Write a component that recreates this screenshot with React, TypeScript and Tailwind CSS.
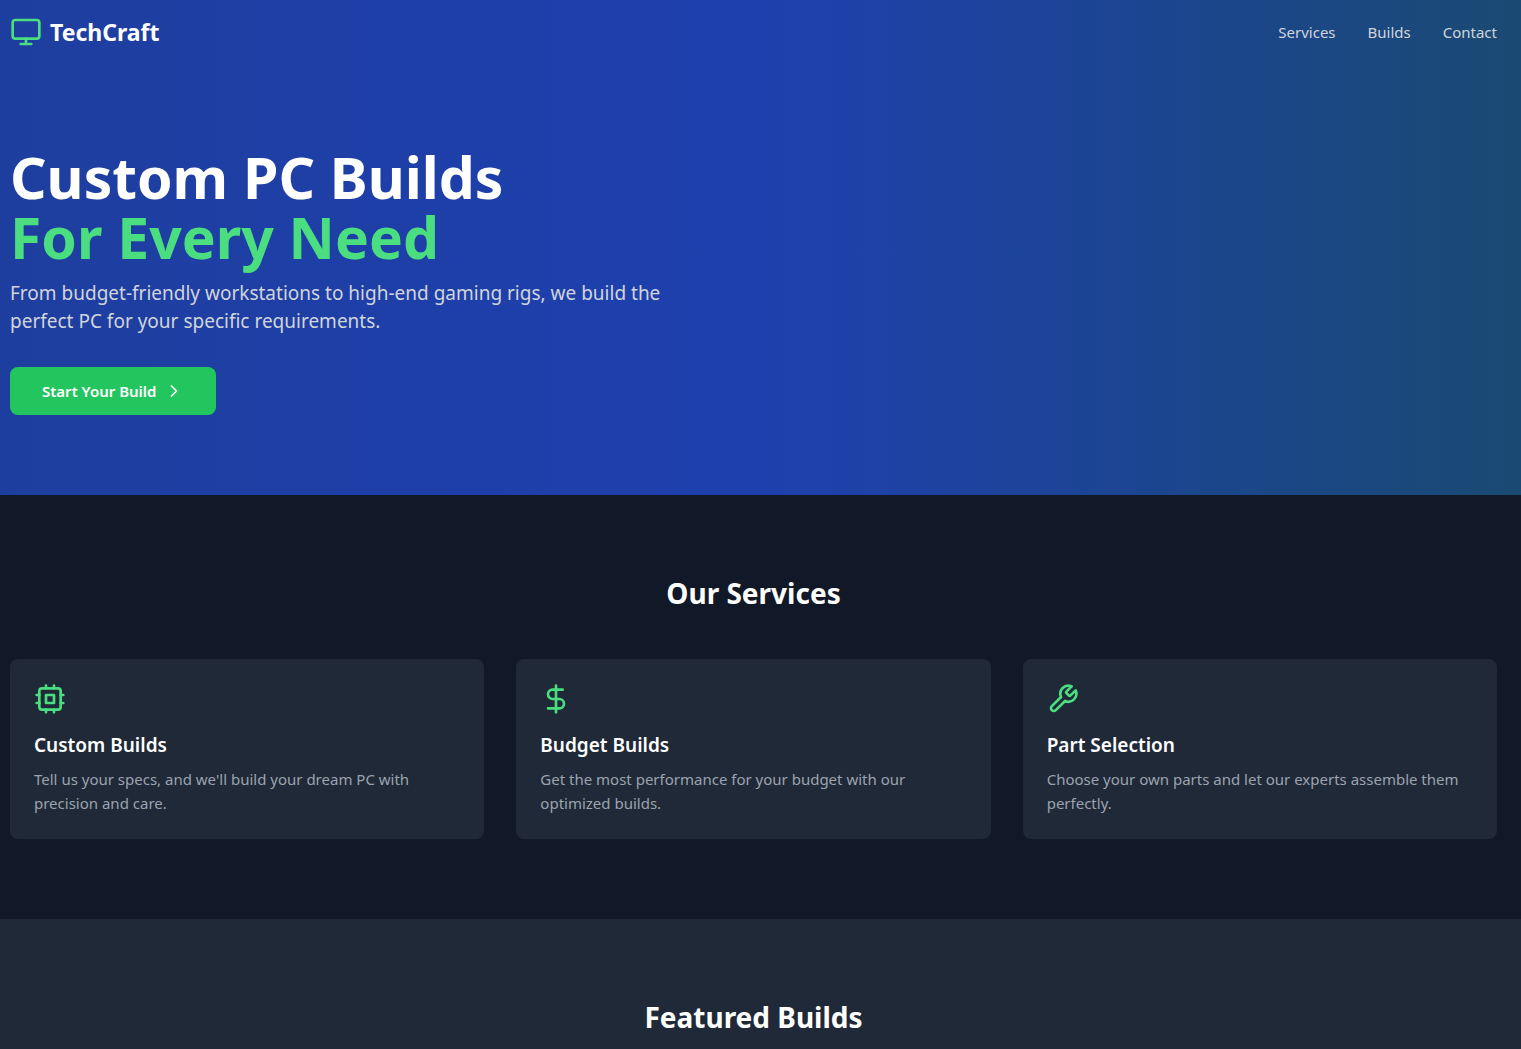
import React from "react";
import { ChevronRight, DollarSign, Monitor } from "lucide-react";

function CpuIcon({ className }: { className?: string }) {
  return (
    <svg
      viewBox="0 0 24 24"
      fill="none"
      stroke="currentColor"
      strokeWidth="2"
      strokeLinecap="round"
      strokeLinejoin="round"
      className={className}
    >
      <rect width="16" height="16" x="4" y="4" rx="2" />
      <rect width="6" height="6" x="9" y="9" />
      <path d="M15 2v2M15 20v2M2 15h2M2 9h2M20 15h2M20 9h2M9 2v2M9 20v2" />
    </svg>
  );
}

function WrenchIcon({ className }: { className?: string }) {
  return (
    <svg
      viewBox="0 0 24 24"
      fill="none"
      stroke="currentColor"
      strokeWidth="2"
      strokeLinecap="round"
      strokeLinejoin="round"
      className={className}
    >
      <path d="M14.7 6.3a1 1 0 0 0 0 1.4l1.6 1.6a1 1 0 0 0 1.4 0l3.77-3.77a6 6 0 0 1-7.94 7.94l-6.91 6.91a2.12 2.12 0 0 1-3-3l6.91-6.91a6 6 0 0 1 7.94-7.94l-3.76 3.76z" />
    </svg>
  );
}

const services = [
  {
    icon: CpuIcon,
    title: "Custom Builds",
    text: "Tell us your specs, and we'll build your dream PC with precision and care.",
  },
  {
    icon: DollarSign,
    title: "Budget Builds",
    text: "Get the most performance for your budget with our optimized builds.",
  },
  {
    icon: WrenchIcon,
    title: "Part Selection",
    text: "Choose your own parts and let our experts assemble them perfectly.",
  },
];

export default function App() {
  return (
    <div className="min-h-screen bg-[#111827] text-white text-[15px] leading-6 font-['Noto_Sans',sans-serif]">
      {/* Hero */}
      <header className="bg-linear-to-r/srgb from-[#1e3e9f] via-[#1e40af] to-[#1a4a73]">
        <nav className="flex items-center justify-between pl-[10px] pr-6 pt-[15px] pb-4">
          <a href="#" className="flex items-center gap-2">
            <Monitor className="w-8 h-8 text-[#4ade80]" />
            <span className="text-[23px] leading-[34px] font-bold">TechCraft</span>
          </a>
          <div className="flex gap-8 text-[#d1d5db]">
            <a href="#services" className="hover:text-white">Services</a>
            <a href="#builds" className="hover:text-white">Builds</a>
            <a href="#contact" className="hover:text-white">Contact</a>
          </div>
        </nav>

        <div className="pl-[10px] pr-6 pt-[82px] pb-20">
          <h1 className="text-[57px] leading-[60px] font-bold mb-3">
            Custom PC Builds
            <span className="block text-[#4ade80]">For Every Need</span>
          </h1>
          <p className="max-w-2xl text-[19px] leading-7 text-[#d1d5db] mb-8">
            From budget-friendly workstations to high-end gaming rigs, we build the perfect PC for your specific requirements.
          </p>
          <button className="flex items-center gap-2 bg-[#22c55e] px-8 py-3 rounded-lg font-semibold">
            Start Your Build
            <ChevronRight className="w-5 h-5" />
          </button>
        </div>
      </header>

      {/* Services */}
      <section id="services" className="pl-[10px] pr-6 py-20">
        <h2 className="text-[28px] leading-9 font-bold text-center mb-12">Our Services</h2>
        <div className="grid grid-cols-1 md:grid-cols-3 gap-8">
          {services.map(({ icon: Icon, title, text }) => (
            <div key={title} className="bg-[#1f2937] p-6 rounded-lg">
              <Icon className="w-8 h-8 text-[#4ade80] mb-4" />
              <h3 className="text-[19px] leading-7 font-semibold mb-2">{title}</h3>
              <p className="text-[#9ca3af]">{text}</p>
            </div>
          ))}
        </div>
      </section>

      {/* Featured builds */}
      <section id="builds" className="bg-[#1f2937] pl-[10px] pr-6 py-20">
        <h2 className="text-[28px] leading-9 font-bold text-center">Featured Builds</h2>
      </section>
    </div>
  );
}
